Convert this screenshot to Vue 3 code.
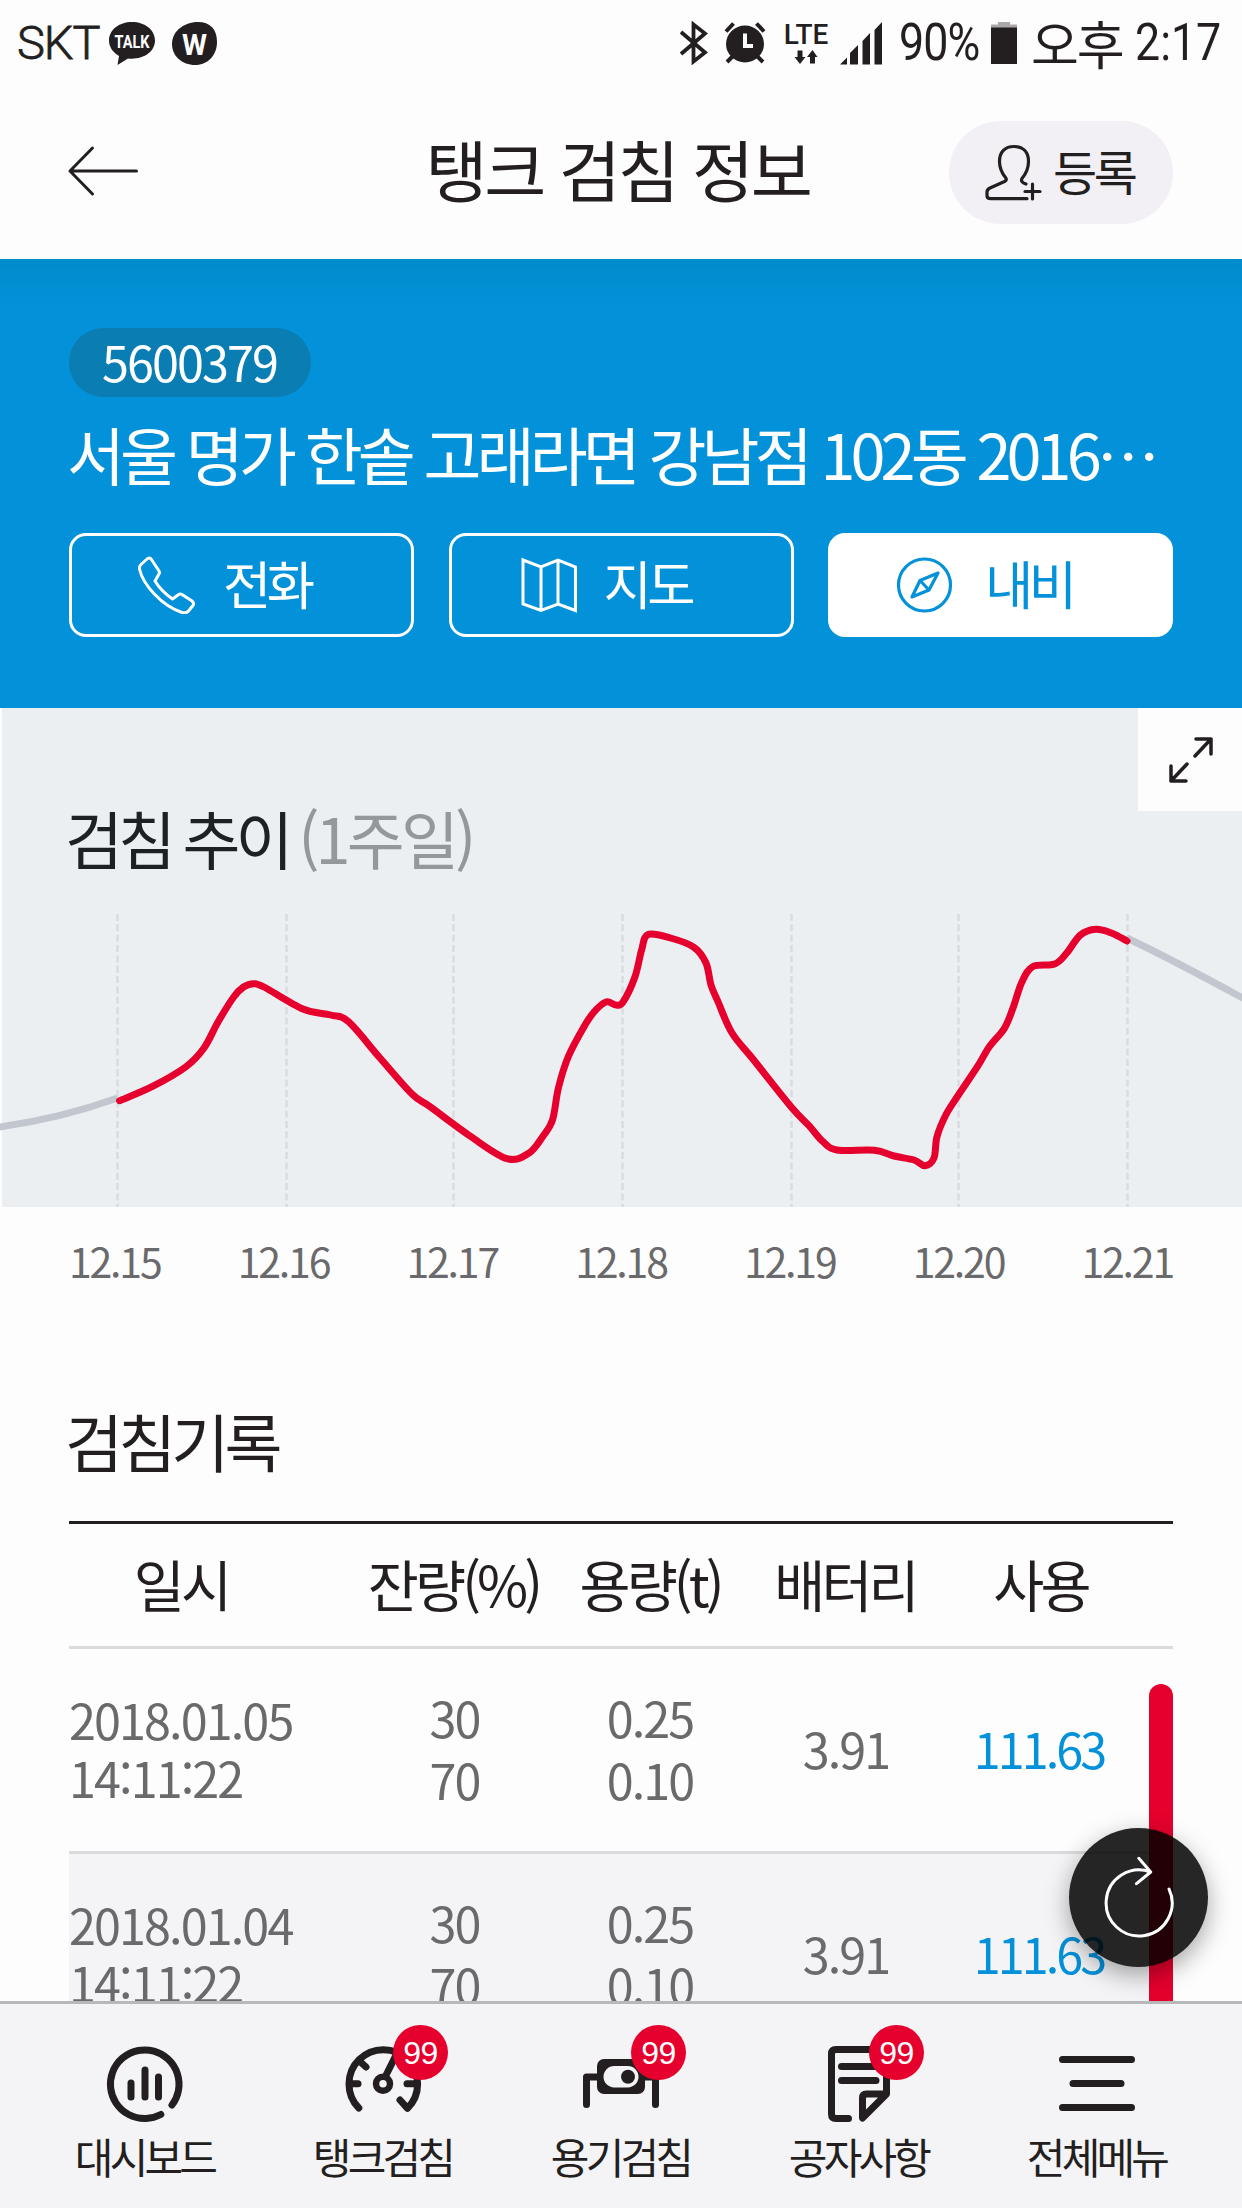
<script setup>
const days = ['12.15', '12.16', '12.17', '12.18', '12.19', '12.20', '12.21']
const gridX = [117.5, 286.5, 453.5, 622.5, 791.5, 958.5, 1127.5]

const week = [
  [119.6, 1100.7], [152, 1086.7], [186, 1066.7], [204, 1048], [218, 1022], [233.7, 997], [243.5, 987],
  [253.5, 983.7], [264, 987], [303, 1009], [330.7, 1015], [348.5, 1021.7], [380, 1058], [412, 1094], [430, 1106.7],
  [471, 1136.7], [507, 1158.7], [528.7, 1153.3], [542.6, 1136.7], [552.5, 1120], [558.4, 1088],
  [568.3, 1056.7], [584, 1026.7], [594, 1012], [606, 1002], [616, 1005], [623, 1002], [635, 976.7], [641.6, 950],
  [648, 934.5], [670.5, 938], [694, 947.3], [706, 963], [711, 985], [718, 1001.7], [732, 1033],
  [753.7, 1060], [791, 1106.7], [809, 1125.7], [823, 1141.7], [837, 1150], [874.5, 1150.3],
  [894, 1156], [914, 1160], [925, 1165.7], [934, 1158], [937, 1136.7], [945.8, 1115], [958.4, 1095],
  [977.4, 1066.7], [989.3, 1046.7], [1004.4, 1028.3], [1013, 1008], [1022, 981.7], [1033, 966.5],
  [1054.7, 964], [1066.5, 953.3], [1080.4, 935], [1096, 929.3], [1112, 933.3], [1127, 941],
]

// Catmull-Rom spline through the readings, written as cubic Béziers
function spline(p) {
  let d = `M${p[0][0]} ${p[0][1]}`
  for (let i = 0; i < p.length - 1; i++) {
    const a = p[i - 1] || p[i]
    const b = p[i]
    const c = p[i + 1]
    const e = p[i + 2] || c
    const k = 6
    d += `C${b[0] + (c[0] - a[0]) / k} ${b[1] + (c[1] - a[1]) / k} ${c[0] - (e[0] - b[0]) / k} ${c[1] - (e[1] - b[1]) / k} ${c[0]} ${c[1]}`
  }
  return d
}

const rows = [
  { date: '2018.01.05', time: '14:11:22', rate: ['30', '70'], volume: ['0.25', '0.10'], battery: '3.91', usage: '111.63' },
  { date: '2018.01.04', time: '14:11:22', rate: ['30', '70'], volume: ['0.25', '0.10'], battery: '3.91', usage: '111.63' },
]
</script>

<template>
  <div class="screen" lang="ko">
    <div class="status">
      <span class="carrier">SKT</span>
      <svg class="talk" width="46" height="43" viewBox="0 0 46 43">
        <path d="M23 0C10 0 0 8 0 18.500c0 6.500 4 12 10 15.500L8.500 43 19 36.500c15 1.500 27-6.500 27-18C46 8 36 0 23 0z" fill="#231f20" />
        <text x="23" y="26" text-anchor="middle" textLength="35" lengthAdjust="spacingAndGlyphs" class="talk-text">TALK</text>
      </svg>
      <svg class="wicon" width="45" height="43" viewBox="0 0 45 43">
        <path d="M26 0C15 0 0 7 0 22c0 12 10 21 23 21s22-10 22-23C45 7 38 0 26 0z" fill="#231f20" />
        <text x="22.500" y="32.500" text-anchor="middle" textLength="25" lengthAdjust="spacingAndGlyphs" class="w-text">W</text>
      </svg>
      <div class="status-right">
        <svg class="bt" width="29" height="44" viewBox="0 0 29 44" fill="none" stroke="#231f20" stroke-width="3.800">
          <path d="M2 11L26 31.500 14.500 40.500V3.500L26 12.500 2 33" />
        </svg>
        <svg class="alarm" width="42" height="42" viewBox="0 0 42 42">
          <path d="M2 9.500L9.500 1.500M40 9.500L32.500 1.500M3 40l6-6M39 40l-6-6" stroke="#231f20" stroke-width="4" fill="none" />
          <ellipse cx="21" cy="22" rx="19" ry="18.500" fill="#231f20" />
          <path d="M21 11.500v12.500h8" stroke="#fdfdfd" stroke-width="4" fill="none" />
        </svg>
        <div class="lte">
          <span>LTE</span>
          <svg width="24" height="14" viewBox="0 0 24 14" fill="#231f20">
            <path d="M3.500.500h5v6.500h3L6 14 .5 7h3zM16 13.500h5V7h2.500L18.500 0 13 7h3z" />
          </svg>
        </div>
        <svg class="signal" width="43" height="43" viewBox="0 0 43 43" fill="#231f20">
          <path d="M0 42.500l7-7v7zM10 42.500V31l8-8v19.500zM22.500 42.500V19l7.500-8v31.500zM34.500 42.500V8L42 0v42.500z" />
        </svg>
        <span class="percent">90%</span>
        <svg class="battery" width="28" height="42" viewBox="0 0 28 42">
          <path d="M8 0h12v2.500h7V7H1V2.500h7z" fill="#aaa8aa" />
          <path d="M1 5.500h26V42H1z" fill="#231f20" />
        </svg>
        <span class="ampm">오후</span>
        <span class="clock">2:17</span>
      </div>
    </div>

    <header class="header">
      <svg class="back" width="72" height="52" viewBox="0 0 72 52" fill="none" stroke="#231f20" stroke-width="3" stroke-linecap="round" stroke-linejoin="round">
        <path d="M69.500 26H3M25.500 3L3 26l22.500 23" />
      </svg>
      <h1>탱크 검침 정보</h1>
      <button class="register">
        <svg width="58" height="58" viewBox="0 0 58 58" fill="none" stroke="#231f20" stroke-width="3.200" stroke-linecap="round" stroke-linejoin="round">
          <path d="M42 54.700H6c-2.500 0-4-1-4-3V48c0-2 1-3 3-4L19.500 37.500Q22.500 36 20.500 33.500C16 28 14.500 24 14.500 17.500 14.500 8 20 2.500 29 2.500S43.500 8 43.500 17.500C43.500 24 42 28.500 37 34.500Q35 38 41 40M47.500 40v15M40 47.500h15" />
        </svg>
        <span>등록</span>
      </button>
    </header>

    <section class="summary">
      <span class="code">5600379</span>
      <h2>서울 명가 한솥 고래라면 강남점 102동 2016…</h2>
      <div class="actions">
        <button class="action">
          <svg width="57" height="58" viewBox="0 0 57 58" fill="none" stroke="#fff" stroke-width="3" stroke-linejoin="round">
            <path d="M8.500 3.500Q11.500.5 13.500 3.500L21 15Q22 16.500 21 18L17 25Q23 35 34.500 43L40 39Q42 37.500 44 38.500L54 45Q56.500 47 55 49.500L50 55.500Q47.500 57.500 44 56.500C24 50 5 29 1.500 13Q1 10.500 3 8.500z" />
          </svg>
          <span>전화</span>
        </button>
        <button class="action map">
          <svg width="57" height="58" viewBox="0 0 57 58" fill="none" stroke="#fff" stroke-width="3" stroke-linejoin="miter">
            <path d="M2 4L20 11 37 4 54.500 11V54.500L37 48 20 54.500 2 48zM20 11V54M37 4V48" />
          </svg>
          <span>지도</span>
        </button>
        <button class="action on">
          <svg width="57" height="58" viewBox="0 0 57 58" fill="none" stroke="#0391d9" stroke-width="3.200" stroke-linejoin="round">
            <circle cx="28.500" cy="29" r="26" />
            <path d="M42 17L24 24.500 16 41 33 34zM24 24.500L33 34" />
          </svg>
          <span>내비</span>
        </button>
      </div>
    </section>

    <section class="trend">
      <h3>검침 추이 <em>(1주일)</em></h3>
      <svg class="chart" width="1242" height="293" viewBox="0 914 1242 293" fill="none">
        <path v-for="x in gridX" :key="x" :d="`M${x} 914V1207`" stroke="#d9dbdf" stroke-width="2.500" stroke-dasharray="7 3.350" />
        <path d="M-4 1127.500Q59 1119 117.600 1098M1127 938Q1175 961 1250 1002" stroke="#c2c7cf" stroke-width="7" />
        <path :d="spline(week)" stroke="#e6002d" stroke-width="7" stroke-linecap="round" stroke-linejoin="round" />
      </svg>
      <button class="expand">
        <svg width="46" height="48" viewBox="0 0 46 48" fill="none" stroke="#231f20" stroke-width="3.500" stroke-linecap="round" stroke-linejoin="round">
          <path d="M27 20L43 3M28 3H43V18M19 28L3 45M3 30V45H18" />
        </svg>
      </button>
    </section>

    <div class="axis">
      <span v-for="d in days" :key="d">{{ d }}</span>
    </div>

    <section class="records">
      <h3>검침기록</h3>
      <div class="table">
        <div class="row head">
          <span class="when">일시</span><span>잔량(%)</span><span>용량(t)</span><span>배터리</span><span>사용</span>
        </div>
        <div v-for="r in rows" :key="r.date" class="row body">
          <span class="when">{{ r.date }}<br />{{ r.time }}</span>
          <span class="pair">{{ r.rate[0] }}<br />{{ r.rate[1] }}</span>
          <span class="pair volume">{{ r.volume[0] }}<br />{{ r.volume[1] }}</span>
          <span>{{ r.battery }}</span>
          <span class="usage">{{ r.usage }}</span>
        </div>
        <i class="scrollbar"></i>
      </div>
    </section>

    <button class="refresh">
      <svg width="76" height="86" viewBox="1100 1854 76 86" fill="none" stroke="#fff" stroke-width="3" stroke-linecap="round" stroke-linejoin="round">
        <path d="M1168 1888A33 33 0 1 1 1149.500 1871M1137.800 1857.300L1149.700 1871 1135.500 1882.700" />
      </svg>
    </button>

    <nav class="nav">
      <a>
        <svg width="80" height="80" viewBox="105 2044 80 80" fill="none" stroke="#231f20" stroke-width="7" stroke-linecap="round">
          <path d="M160.800 2114.500A34.300 34.300 0 1 1 172 2105M131 2083v14M145 2070v27M158.500 2077v20" />
        </svg>
        <span>대시보드</span>
      </a>
      <a>
        <svg width="80" height="80" viewBox="343 2044 80 80" fill="none" stroke="#231f20" stroke-width="7" stroke-linecap="round" stroke-linejoin="round">
          <path d="M358.800 2108A34.300 34.300 0 1 1 407.500 2108.300L400 2100M350 2083.700h8M415 2083.700h-8M360 2061.500l6 5.500M386.600 2074l9-18" />
          <circle cx="383" cy="2083.700" r="7" stroke-width="6.500" />
        </svg>
        <b>99</b>
        <span>탱크검침</span>
      </a>
      <a>
        <svg width="80" height="80" viewBox="581 2044 80 80" fill="none" stroke="#231f20" stroke-width="7" stroke-linecap="round" stroke-linejoin="round">
          <path d="M586.500 2104.500V2077H597M655.500 2104.500V2077H645" />
          <rect x="597" y="2059" width="48" height="35" rx="7" fill="#231f20" stroke="none" />
          <rect x="603.500" y="2066" width="35" height="21.500" rx="10.700" fill="#f4f3f6" stroke="none" />
          <circle cx="628" cy="2076.700" r="7" fill="#231f20" stroke="none" />
        </svg>
        <b>99</b>
        <span>용기검침</span>
      </a>
      <a>
        <svg width="80" height="80" viewBox="819 2044 80 80" fill="none" stroke="#231f20" stroke-width="7" stroke-linecap="round" stroke-linejoin="round">
          <path d="M848.500 2118.500H836Q831.500 2118.500 831.500 2114V2054Q831.500 2049.500 836 2049.500H882Q886.500 2049.500 886.500 2054V2094L862.500 2118V2098Q862.500 2094 866.500 2094H886M841.500 2066.500H877M841.500 2080.500H876" />
        </svg>
        <b>99</b>
        <span>공자사항</span>
      </a>
      <a>
        <svg width="80" height="80" viewBox="1057 2044 80 80" fill="none" stroke="#231f20" stroke-width="7" stroke-linecap="round">
          <path d="M1062.500 2059.500h69M1073 2083.500h48M1062.500 2107.500h69" />
        </svg>
        <span>전체메뉴</span>
      </a>
    </nav>
  </div>
</template>

<style>
body { margin: 0; }
</style>

<style scoped>
.screen {
  position: relative;
  width: 1242px;
  height: 2208px;
  overflow: hidden;
  display: flex;
  flex-direction: column;
  background: #fdfdfd;
  color: #231f20;
  font-family: "Noto Sans CJK KR", sans-serif;
}
h1, h2, h3 { margin: 0; font-weight: 400; }
button { border: 0; padding: 0; margin: 0; font: inherit; color: inherit; }
svg { display: block; flex: none; }
span { white-space: nowrap; }

.status {
  height: 86px;
  flex: none;
  display: flex;
  align-items: center;
  padding: 0 18px 0 17px;
  font-family: Roboto, "Noto Sans CJK KR", sans-serif;
  font-size: 47px;
  line-height: 86px;
}
.carrier { font-weight: 300; letter-spacing: -1px; width: 92px; -webkit-text-stroke: 0.8px; }
.talk-text { font: 700 18px Roboto, sans-serif; fill: #fdfdfd; }
.w-text { font: 700 29px Roboto, sans-serif; fill: #fdfdfd; }
.wicon { margin-left: 17px; }
.status-right { margin-left: auto; display: flex; align-items: center; }
.alarm { margin-left: 16px; }
.lte { margin-left: 17px; display: flex; flex-direction: column; align-items: center; gap: 3px; width: 46px; }
.lte span { font-size: 28px; line-height: 24px; font-weight: 500; letter-spacing: 0; }
.signal { margin-left: 11px; }
.percent { margin-left: 16px; width: 82px; font-size: 52px; letter-spacing: -1px; transform: scaleX(0.86); transform-origin: left; }
.battery { margin-left: 9px; }
.ampm { margin-left: 13px; font-size: 52px; letter-spacing: -2px; width: 94px; font-family: "Noto Sans CJK KR", sans-serif; }
.clock { margin-left: 10px; width: 89px; font-size: 52px; transform: scaleX(0.86); transform-origin: left; }

.header {
  height: 173px;
  flex: none;
  display: flex;
  align-items: center;
  justify-content: space-between;
  padding: 0 69px 0 67px;
}
h1 { font-size: 67.500px; line-height: 100px; letter-spacing: -3.300px; margin-left: 147px; padding-bottom: 10px; }
.back { margin-bottom: 4px; }
.register {
  width: 224px;
  height: 103px;
  border-radius: 52px;
  background: #f2f0f4;
  display: flex;
  align-items: center;
  padding-left: 36px;
  gap: 10px;
}
.register span { font-size: 48px; line-height: 60px; letter-spacing: -3.500px; padding-bottom: 6px; }

.summary {
  height: 449px;
  flex: none;
  box-sizing: border-box;
  padding: 69px 69px 0;
  background: linear-gradient(#008ccb, #0391d9 46px);
  color: #fff;
  display: flex;
  flex-direction: column;
  align-items: flex-start;
}
.code {
  height: 69px;
  line-height: 67px;
  width: 209px;
  padding-left: 33px;
  border-radius: 35px;
  background: #0a7db3;
  font-size: 48.500px;
  letter-spacing: -1.900px;
}
h2 { font-size: 63px; line-height: 90px; margin: 11px 0 0 -2px; letter-spacing: -4.900px; white-space: nowrap; }
.actions { margin-top: 35px; width: 1104px; display: flex; justify-content: space-between; }
.action {
  width: 345px;
  height: 104px;
  box-sizing: border-box;
  border: 3px solid #fff;
  border-radius: 17px;
  background: #0391d9;
  display: flex;
  align-items: center;
  padding-left: 66px;
  gap: 28px;
}
.action.map { padding-left: 69px; gap: 26px; }
.action span { font-size: 52.500px; line-height: 60px; letter-spacing: -4.500px; padding-bottom: 6px; }
.action.on { background: #fff; color: #0391d9; padding-left: 65px; gap: 32px; }

.trend { position: relative; height: 499px; flex: none; background: linear-gradient(90deg, #fdfdfd 2px, #ebeff2 2px); }
.trend h3 { padding: 82px 0 0 65px; height: 124px; line-height: 94px; font-size: 63px; letter-spacing: -5px; word-spacing: -1px; color: #1d2123; }
.trend em { font-style: normal; color: #94989b; margin-left: -2px; letter-spacing: -3.800px; }
.expand {
  position: absolute;
  top: 0;
  right: 0;
  width: 104px;
  height: 103px;
  padding-left: 2px;
  background: #fdfdfd;
  display: flex;
  align-items: center;
  justify-content: center;
}

.axis {
  flex: none;
  height: 105px;
  padding: 0 69px 5px 69px;
  display: flex;
  justify-content: space-between;
  align-items: center;
  color: #6a696b;
  font-size: 41px;
  letter-spacing: -2.200px;
}

.records { flex: 1; min-height: 0; padding: 0 69px; }
.records h3 { margin-top: 73px; line-height: 100px; height: 131px; font-size: 63px; letter-spacing: -4.800px; margin-left: -4px; }
.table { position: relative; border-top: 3px solid #231f20; }
.row { display: grid; grid-template-columns: 285px 201px 192px 198px 193px; align-items: center; text-align: center; }
.head { height: 117px; padding-bottom: 5px; font-size: 55.500px; letter-spacing: -3.900px; }
.head span { position: relative; left: -1px; }
.head .when { padding-right: 59px; }
.body {
  height: 197px;
  padding-bottom: 5px;
  border-top: 3px solid #dbdadc;
  color: #6a696b;
  font-size: 48.500px;
  line-height: 62px;
  letter-spacing: -2px;
}
.body:nth-child(odd) { background: #f4f3f6; }
.body .when { text-align: left; line-height: 58px; letter-spacing: -1.900px; }
.body .volume { padding-right: 2px; }
.body .usage { color: #0391d9; letter-spacing: -2.900px; padding-right: 5px; }
.scrollbar { position: absolute; right: 0; top: 160px; width: 24px; height: 500px; border-radius: 12px; background: #e6002d; }

.refresh {
  position: absolute;
  left: 1069px;
  top: 1828px;
  width: 139px;
  height: 139px;
  border-radius: 50%;
  background: rgba(0, 0, 0, 0.85);
  box-shadow: 0 8px 24px rgba(0, 0, 0, 0.35);
  display: flex;
  align-items: center;
  justify-content: center;
}

.nav {
  position: relative;
  flex: none;
  height: 204px;
  border-top: 3px solid #b8b7b9;
  background: #f4f3f6;
  display: flex;
  padding: 0 26px;
}
.nav a { position: relative; flex: 1; display: flex; flex-direction: column; align-items: center; padding-top: 40px; }
.nav span { margin: 5px 1px 0 0; font-size: 42px; line-height: 54px; letter-spacing: -3.800px; }
.nav b {
  position: absolute;
  left: 129px;
  top: 21px;
  width: 55px;
  height: 55px;
  border-radius: 50%;
  background: #e6002d;
  color: #fff;
  font: 400 32px/56px "Liberation Sans", sans-serif;
  letter-spacing: -0.500px;
  text-align: center;
}
</style>
